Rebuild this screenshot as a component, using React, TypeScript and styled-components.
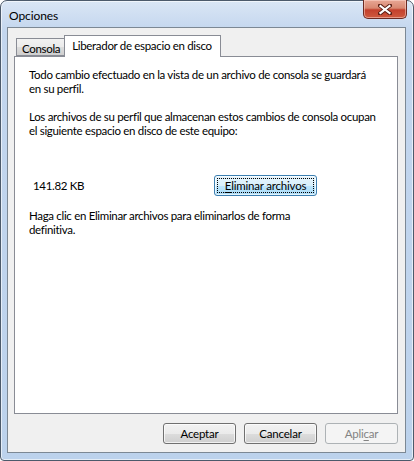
import React from "react";
import styled, { createGlobalStyle } from "styled-components";

const FONT = `"Lato", "Noto Sans", sans-serif`;

const Global = createGlobalStyle`
  html, body { margin: 0; padding: 0; background: #ffffff; }
  body { font-family: ${FONT}; font-size: 11.5px; letter-spacing: -0.32px; color: #000; }
  * { box-sizing: border-box; }
`;

const Window = styled.div`
  width: 414px;
  height: 461px;
  border: 1px solid #4c5a6b;
  border-radius: 7px 7px 4px 4px;
  background: linear-gradient(180deg, #dae6f5 0px, #c3d6ee 30px, #bcd2ec 100%);
  box-shadow: inset 0 0 0 1px rgba(255, 255, 255, 0.6);
  display: flex;
  flex-direction: column;
  padding: 0 7px 7px 6px;
`;

const TitleBar = styled.div`
  height: 28px;
  display: flex;
  align-items: flex-start;
  justify-content: space-between;
`;

const Title = styled.span`
  margin-top: 7px;
  margin-left: 2px;
  font-size: 12px;
  letter-spacing: -0.1px;
  color: #000;
`;

const CloseButton = styled.div`
  width: 44px;
  height: 19px;
  margin-top: -1px;
  margin-right: -1px;
  border: 1px solid #6b2a22;
  border-top: none;
  border-radius: 0 0 5px 5px;
  background: linear-gradient(180deg, #e8a795 0%, #d88871 45%, #c3402c 55%, #cf5a3f 100%);
  box-shadow: inset 0 0 0 1px rgba(255, 220, 210, 0.5);
  display: flex;
  align-items: center;
  justify-content: center;
`;

const Client = styled.div`
  flex: 1;
  border: 1px solid #7c8894;
  background: #f0f0f0;
  display: flex;
  flex-direction: column;
  padding: 7px 7px 8px 6px;
`;

const TabStrip = styled.div`
  height: 21px;
  display: flex;
  align-items: flex-end;
  padding-left: 2px;
  position: relative;
  z-index: 1;
`;

const Tab = styled.div<{ $active?: boolean }>`
  height: ${(p) => (p.$active ? "22px" : "18px")};
  margin-bottom: ${(p) => (p.$active ? "-1px" : "0")};
  padding: ${(p) => (p.$active ? "2px 8px 0 7px" : "2px 4px 0 5px")};
  border: 1px solid #898c95;
  border-bottom: ${(p) => (p.$active ? "none" : "1px solid #898c95")};
  margin-left: ${(p) => (p.$active ? "-1px" : "0")};
  background: ${(p) =>
    p.$active ? "#ffffff" : "linear-gradient(180deg, #f2f2f2 0%, #ebebeb 50%, #dddddd 51%, #cfcfcf 100%)"};
  line-height: 15px;
  color: #000;
  white-space: nowrap;
`;

const Panel = styled.div`
  height: 358px;
  background: #ffffff;
  border: 1px solid #898c95;
  padding: 11px 14px 0 14px;
  display: flex;
  flex-direction: column;
`;

const Para = styled.p<{ $gap?: number }>`
  margin: 0 0 ${(p) => p.$gap ?? 14}px 0;
  line-height: 14px;
  white-space: nowrap;
`;

const SizeRow = styled.div`
  display: flex;
  align-items: center;
  height: 21px;
  margin-top: 37px;
  margin-bottom: 13px;
  padding-left: 4px;
`;

const SizeText = styled.span`
  width: 181px;
`;

const Button = styled.button<{ $width?: number; $disabled?: boolean; $focused?: boolean }>`
  width: ${(p) => p.$width ?? 73}px;
  height: 21px;
  padding: 0;
  font-family: ${FONT};
  font-size: 11.5px;
  letter-spacing: -0.2px;
  line-height: 15px;
  border-radius: 3px;
  border: 1px solid ${(p) => (p.$disabled ? "#adb2b5" : p.$focused ? "#3c7fb1" : "#707070")};
  color: ${(p) => (p.$disabled ? "#838383" : "#000")};
  background: ${(p) =>
    p.$disabled
      ? "#f4f4f4"
      : p.$focused
      ? "linear-gradient(180deg, #e5f4fc 0%, #d9f0fc 50%, #bee6fd 51%, #a7d9f5 100%)"
      : "linear-gradient(180deg, #f2f2f2 0%, #ebebeb 50%, #dddddd 51%, #cfcfcf 100%)"};
  box-shadow: inset 0 0 0 1px ${(p) => (p.$disabled ? "#f4f4f4" : "rgba(255,255,255,0.7)")};
  display: flex;
  align-items: center;
  justify-content: center;
  position: relative;
`;

const FocusRing = styled.span`
  position: absolute;
  inset: 2px;
  border: 1px dotted #000;
`;

const Under = styled.span`
  text-decoration: underline;
  text-underline-offset: 2px;
`;

const ButtonRow = styled.div`
  display: flex;
  justify-content: flex-end;
  gap: 8px;
  margin-top: 9px;
`;

export default function App() {
  return (
    <>
      <Global />
      <Window>
        <TitleBar>
          <Title>Opciones</Title>
          <CloseButton>
            <svg width="14" height="11" viewBox="0 0 14 11">
              <path
                d="M2 1.5 L12 9.5 M12 1.5 L2 9.5"
                stroke="#5a1e14"
                strokeWidth="4"
                strokeLinecap="square"
              />
              <path
                d="M2.5 2 L11.5 9 M11.5 2 L2.5 9"
                stroke="#ffffff"
                strokeWidth="2.2"
                strokeLinecap="square"
              />
            </svg>
          </CloseButton>
        </TitleBar>
        <Client>
          <TabStrip>
            <Tab>Consola</Tab>
            <Tab $active>Liberador de espacio en disco</Tab>
          </TabStrip>
          <Panel>
            <Para>
              Todo cambio efectuado en la vista de un archivo de consola se guardará
              <br />
              en su perfil.
            </Para>
            <Para $gap={0}>
              Los archivos de su perfil que almacenan estos cambios de consola ocupan
              <br />
              el siguiente espacio en disco de este equipo:
            </Para>
            <SizeRow>
              <SizeText>141.82 KB</SizeText>
              <Button $width={103} $focused>
                <FocusRing />
                <span>
                  <Under>E</Under>liminar archivos
                </span>
              </Button>
            </SizeRow>
            <Para>
              Haga clic en Eliminar archivos para eliminarlos de forma
              <br />
              definitiva.
            </Para>
          </Panel>
          <ButtonRow>
            <Button>Aceptar</Button>
            <Button>Cancelar</Button>
            <Button $disabled>
              <span>
                Apli<Under>c</Under>ar
              </span>
            </Button>
          </ButtonRow>
        </Client>
      </Window>
    </>
  );
}
